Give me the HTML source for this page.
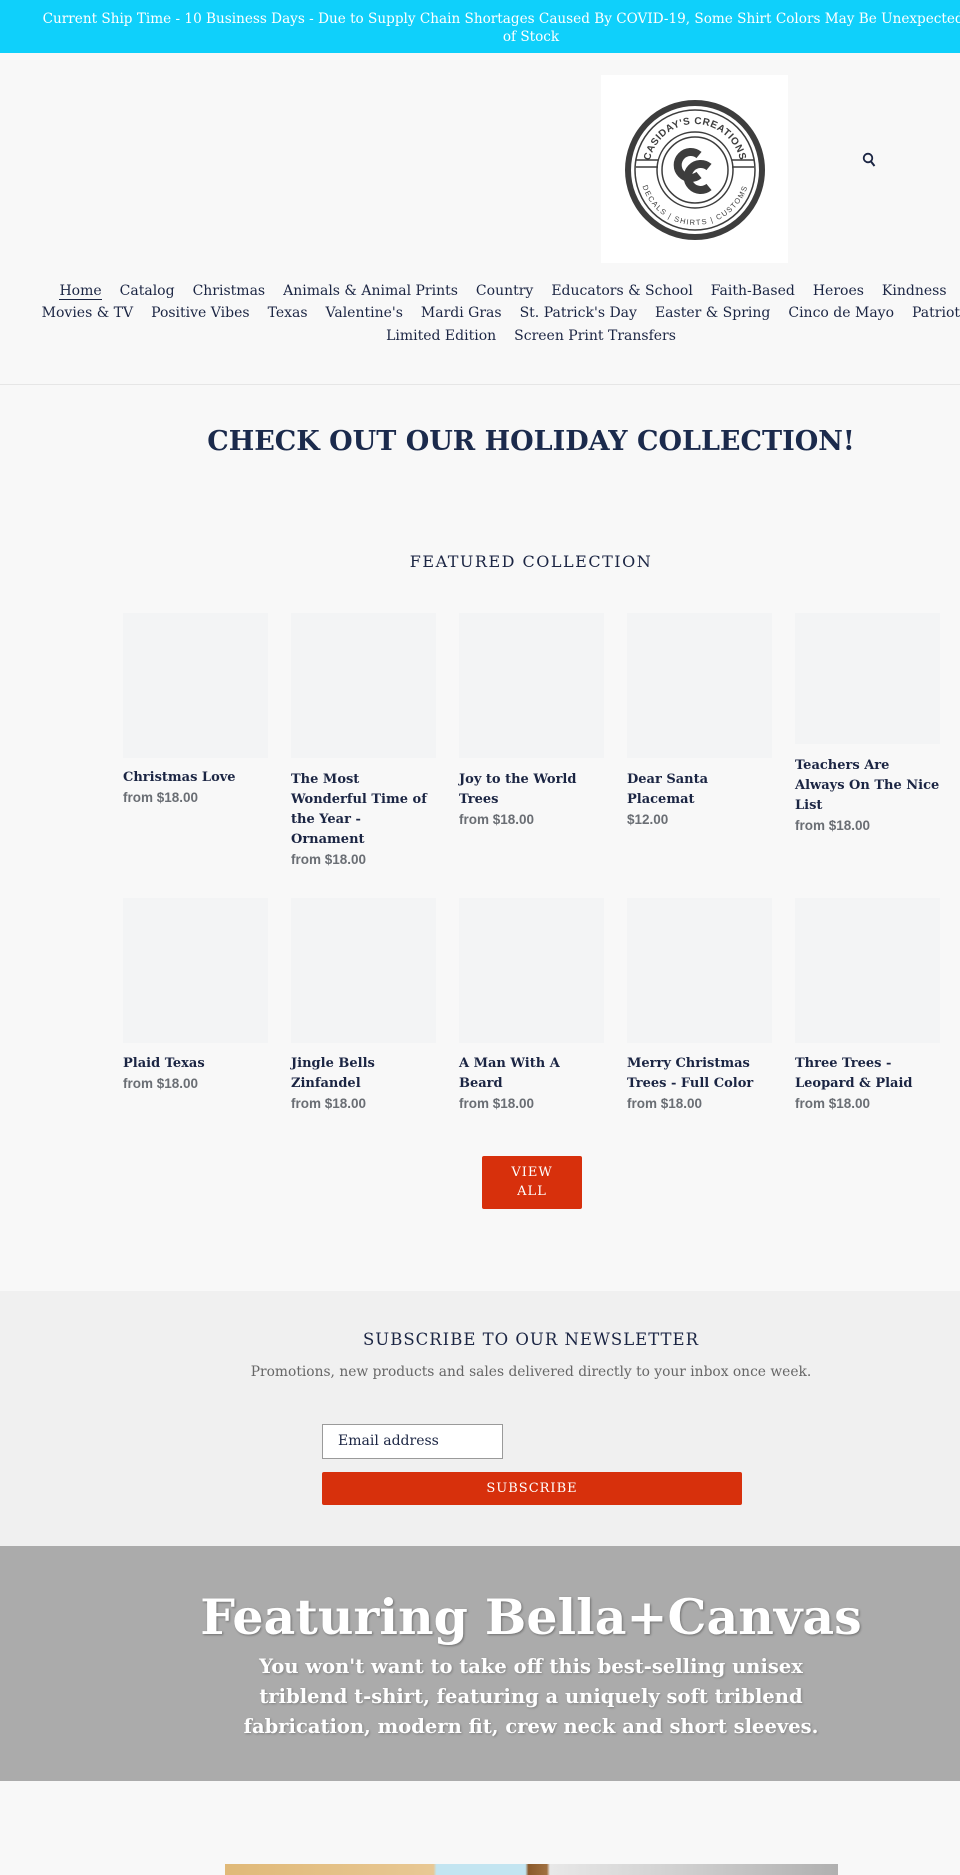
<!DOCTYPE html>
<html><head><meta charset="utf-8">
<style>
*{margin:0;padding:0;box-sizing:border-box}
html,body{width:960px;height:1875px;overflow:hidden;background:#f8f8f8}
body{position:relative;font-family:"DejaVu Serif","Liberation Serif",serif;color:#1b2543}
.w{position:absolute;left:0;width:1062px;text-align:center;white-space:nowrap}
.ab{position:absolute}
.banner{position:absolute;left:0;top:0;width:960px;height:53px;background:#0fd0fb}
.banner .w{color:#fff;font-size:13.6px;line-height:18px}
.nav{font-size:14px;line-height:22px;color:#1b2543}
.nav span{margin:0 9px}
.nav .act{border-bottom:1px solid #1b2543}
.card{position:absolute;width:145px}
.img{width:145px;height:145px;background:#f3f4f5}
.t{font-weight:bold;font-size:13px;line-height:20px;margin-top:10px;color:#1b2543}
.p{font-family:"Liberation Sans",sans-serif;font-weight:bold;font-size:13.5px;line-height:20px;color:#6a6e74}
</style></head><body>
<div class="banner">
 <div class="w" style="top:10px;left:-14px;width:1076px">Current Ship Time - 10 Business Days - Due to Supply Chain Shortages Caused By COVID-19, Some Shirt Colors May Be Unexpectedly Out</div>
 <div class="w" style="top:28px">of Stock</div>
</div>
<div class="ab" style="left:601px;top:75px;width:187px;height:188px;background:#fff">
<svg width="187" height="188" viewBox="0 0 187 188">
 <defs>
  <path id="top" d="M48,95 A46,46 0 0 1 140,95"/>
  <path id="bot" d="M39,95 A55,55 0 0 0 149,95"/>
 </defs>
 <circle cx="94" cy="95" r="67" fill="none" stroke="#3d3d3d" stroke-width="6"/>
 <circle cx="94" cy="95" r="60" fill="none" stroke="#3d3d3d" stroke-width="1.5"/>
 <circle cx="94" cy="95" r="38" fill="none" stroke="#3d3d3d" stroke-width="1.5"/>
 <circle cx="94" cy="95" r="33" fill="none" stroke="#3d3d3d" stroke-width="1.5"/>
 <line x1="35" y1="85" x2="57" y2="85" stroke="#3d3d3d" stroke-width="1.5"/>
 <line x1="131" y1="85" x2="153" y2="85" stroke="#3d3d3d" stroke-width="1.5"/>
 <line x1="35" y1="92" x2="57" y2="92" stroke="#3d3d3d" stroke-width="1.5"/>
 <line x1="131" y1="92" x2="153" y2="92" stroke="#3d3d3d" stroke-width="1.5"/>
 <text font-family="Liberation Sans,sans-serif" font-weight="bold" font-size="10" fill="#3d3d3d" letter-spacing="0.6"><textPath href="#top" startOffset="50%" text-anchor="middle">CASIDAY'S CREATIONS</textPath></text>
 <text font-family="Liberation Sans,sans-serif" font-size="7.5" fill="#3d3d3d" letter-spacing="1.3"><textPath href="#bot" startOffset="50%" text-anchor="middle">DECALS | SHIRTS | CUSTOMS</textPath></text>
 <path d="M98,80 A13,13 0 1 0 98,100" fill="none" stroke="#3d3d3d" stroke-width="8"/>
 <path d="M108,92 A13,13 0 1 0 108,112" fill="none" stroke="#3d3d3d" stroke-width="8"/>
</svg>
</div>
<svg class="ab" style="left:862px;top:152px" width="14" height="16" viewBox="0 0 14 16"><circle cx="6" cy="6" r="4.3" fill="none" stroke="#1b2543" stroke-width="1.8"/><line x1="9" y1="9.5" x2="12.5" y2="14" stroke="#1b2543" stroke-width="2"/></svg>
<div class="w nav" style="top:280px;left:-28px"><span class="act">Home</span><span>Catalog</span><span>Christmas</span><span>Animals &amp; Animal Prints</span><span>Country</span><span>Educators &amp; School</span><span>Faith-Based</span><span>Heroes</span><span>Kindness</span></div>
<div class="w nav" style="top:302px;left:-24px"><span>Movies &amp; TV</span><span>Positive Vibes</span><span>Texas</span><span>Valentine's</span><span>Mardi Gras</span><span>St. Patrick's Day</span><span>Easter &amp; Spring</span><span>Cinco de Mayo</span><span>Patriotic</span></div>
<div class="w nav" style="top:325px"><span>Limited Edition</span><span>Screen Print Transfers</span></div>
<div class="ab" style="left:0;top:384px;width:960px;height:1px;background:#e6e6e6"></div>
<div class="w" style="top:425px;font-size:27px;font-weight:bold;line-height:34px;color:#1b2a4c">CHECK OUT OUR HOLIDAY COLLECTION!</div>
<div class="w" style="top:551px;font-size:16px;letter-spacing:1.5px;line-height:22px">FEATURED COLLECTION</div>

<div class="card" style="left:123px;top:613px"><div class="img"></div><div class="t">Christmas Love</div><div class="p">from $18.00</div></div>
<div class="card" style="left:291px;top:613px"><div class="img"></div><div class="t" style="margin-top:12px">The Most<br>Wonderful Time of<br>the Year -<br>Ornament</div><div class="p">from $18.00</div></div>
<div class="card" style="left:459px;top:613px"><div class="img"></div><div class="t" style="margin-top:12px">Joy to the World<br>Trees</div><div class="p">from $18.00</div></div>
<div class="card" style="left:627px;top:613px"><div class="img"></div><div class="t" style="margin-top:12px">Dear Santa<br>Placemat</div><div class="p">$12.00</div></div>
<div class="card" style="left:795px;top:613px"><div class="img" style="height:131px"></div><div class="t" style="margin-top:12px">Teachers Are<br>Always On The Nice<br>List</div><div class="p">from $18.00</div></div>

<div class="card" style="left:123px;top:898px"><div class="img"></div><div class="t" style="margin-top:11px">Plaid Texas</div><div class="p">from $18.00</div></div>
<div class="card" style="left:291px;top:898px"><div class="img"></div><div class="t" style="margin-top:11px">Jingle Bells<br>Zinfandel</div><div class="p">from $18.00</div></div>
<div class="card" style="left:459px;top:898px"><div class="img"></div><div class="t" style="margin-top:11px">A Man With A<br>Beard</div><div class="p">from $18.00</div></div>
<div class="card" style="left:627px;top:898px"><div class="img"></div><div class="t" style="margin-top:11px">Merry Christmas<br>Trees - Full Color</div><div class="p">from $18.00</div></div>
<div class="card" style="left:795px;top:898px"><div class="img"></div><div class="t" style="margin-top:11px">Three Trees -<br>Leopard &amp; Plaid</div><div class="p">from $18.00</div></div>

<div class="ab" style="left:482px;top:1156px;width:100px;height:53px;background:#d7300c;border-radius:2px;color:#fff;font-size:13px;letter-spacing:1px;line-height:19px;text-align:center;padding-top:7px">VIEW<br>ALL</div>

<div class="ab" style="left:0;top:1291px;width:960px;height:255px;background:#f0f0f0"></div>
<div class="w" style="top:1329px;font-size:16.5px;letter-spacing:1px;line-height:22px">SUBSCRIBE TO OUR NEWSLETTER</div>
<div class="w" style="top:1362px;font-size:13.8px;line-height:20px;color:#666">Promotions, new products and sales delivered directly to your inbox once week.</div>
<div class="ab" style="left:322px;top:1424px;width:181px;height:35px;background:#fff;border:1px solid #9a9a9a;font-size:14px;line-height:33px;padding-left:15px;color:#1b2543">Email address</div>
<div class="ab" style="left:322px;top:1472px;width:420px;height:33px;background:#d7300c;border-radius:2px;color:#fff;font-size:13px;letter-spacing:1px;line-height:33px;text-align:center">SUBSCRIBE</div>

<div class="ab" style="left:0;top:1546px;width:960px;height:235px;background:#ababab"></div>
<div class="w" style="top:1587px;font-size:49px;font-weight:bold;line-height:60px;color:#fff;text-shadow:1px 1px 2px rgba(0,0,0,.35)">Featuring Bella+Canvas</div>
<div class="w" style="top:1652px;font-size:19.5px;font-weight:bold;line-height:30px;color:#fff;text-shadow:1px 1px 2px rgba(0,0,0,.25)">You won't want to take off this best-selling unisex<br>triblend t-shirt, featuring a uniquely soft triblend<br>fabrication, modern fit, crew neck and short sleeves.</div>

<div class="ab" style="left:225px;top:1864px;width:613px;height:11px;background:linear-gradient(90deg,#e0b978 0,#e8c894 34%,#c3e5f1 34.5%,#c3e5f1 49%,#8b5a2b 49.5%,#a07040 52.5%,#e8e8e8 53%,#cfcfcf 75%,#b0b0b0 100%)"></div>
</body></html>
